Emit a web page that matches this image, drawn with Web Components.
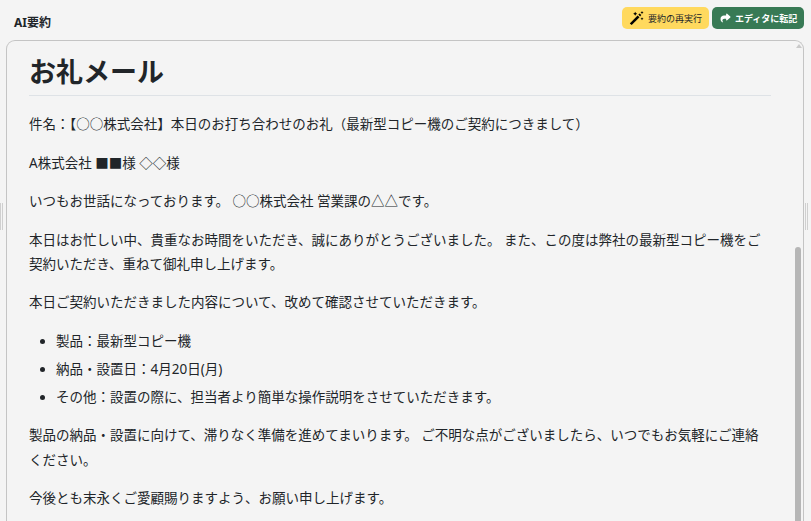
<!DOCTYPE html>
<html lang="ja"><head><meta charset="utf-8"><style>
html,body{margin:0;height:100%;overflow:hidden;background:#f4f4f4}
body{font-family:"Noto Sans","Noto Sans CJK JP",sans-serif;color:#212529}
</style></head><body>
<summary-pane>
  <span slot="title">AI要約</span>
  <action-button slot="actions" kind="rerun">要約の再実行</action-button>
  <action-button slot="actions" kind="transfer">エディタに転記</action-button>
  <doc-view>
    <h1>お礼メール</h1>
    <p>件名：【○○株式会社】本日のお打ち合わせのお礼（最新型コピー機のご契約につきまして）</p>
    <p>A株式会社 ■■様 ◇◇様</p>
    <p>いつもお世話になっております。 ○○株式会社 営業課の△△です。</p>
    <p>本日はお忙しい中、貴重なお時間をいただき、誠にありがとうございました。 また、この度は弊社の最新型コピー機をご契約いただき、重ねて御礼申し上げます。</p>
    <p>本日ご契約いただきました内容について、改めて確認させていただきます。</p>
    <ul><li>製品：最新型コピー機</li><li>納品・設置日：4月20日(月)</li><li>その他：設置の際に、担当者より簡単な操作説明をさせていただきます。</li></ul>
    <p>製品の納品・設置に向けて、滞りなく準備を進めてまいります。 ご不明な点がございましたら、いつでもお気軽にご連絡ください。</p>
    <p>今後とも末永くご愛顧賜りますよう、お願い申し上げます。</p>
  </doc-view>
</summary-pane>
<script>
customElements.define('summary-pane',class extends HTMLElement{constructor(){super();this.attachShadow({mode:'open'}).innerHTML=`<style>
:host{display:flex;flex-direction:column;height:521px;position:relative;box-sizing:border-box;padding:0 7px 0 6px;overflow:hidden}
header{height:40px;flex:none;display:flex;align-items:center;justify-content:space-between;box-sizing:border-box;padding:4px 0 0 8px}
.t{font-size:12px;font-weight:700;color:#212529}
.a{display:flex;gap:3px;position:relative;top:-4px}
.panel{flex:1;min-height:0;border:1px solid #c4c4c4;border-bottom:0;border-radius:9px 9px 0 0;overflow:hidden;position:relative}
.thumb{position:absolute;right:2px;top:206px;bottom:0;width:6px;background:#b6b6b6;border-radius:3px 3px 0 0}
.up{position:absolute;right:1px;top:3px;width:0;height:0;border:3px solid transparent;border-top:0;border-bottom:4px solid #c9c9c9}
.h{position:absolute;top:203px;height:27px;width:3px;box-sizing:border-box;border-left:1px solid #cfcfcf;border-right:1px solid #cfcfcf}
.h.l{left:0}.h.r{right:3px}
</style>
<header><span class="t"><slot name="title"></slot></span><div class="a"><slot name="actions"></slot></div></header>
<div class="panel"><slot></slot><div class="up"></div><div class="thumb"></div></div>
<div class="h l"></div><div class="h r"></div>`}});
const icons={rerun:`<svg width="15" height="14" viewBox="0 0 15 14"><path d="M.8 12.400 L8.600 4.400 L10.500 6.200 L2.700 14Z" fill="#000"/><path d="M9.300 3.600 L10.600 2.400 L12.300 4.100 L11.100 5.400Z" fill="#000"/><path d="M6.200 .8l.7 1.300 1.300.7-1.300.7-.7 1.300-.7-1.300-1.300-.7 1.300-.7zM13 0l.5 1.100 1.100.5-1.100.5-.5 1.100-.5-1.100-1.100-.5 1.100-.5zM13 6.200l.5 1 1 .5-1 .5-.5 1-.5-1-1-.5 1-.5z" fill="#000"/></svg>`,
transfer:`<svg width="11" height="10" viewBox="0 0 512 512"><path fill="#fff" d="M307 34.800c-11.500 5.100-19 16.600-19 29.200v64H176C78.800 128 0 206.800 0 304c0 113.300 81.500 163.900 100.200 174.100 2.500 1.400 5.300 1.900 8.100 1.900 10.900 0 19.700-8.900 19.700-19.700 0-7.500-4.300-14.400-9.800-19.500C108.800 431.900 96 414.400 96 384c0-53 43-96 96-96h96v64c0 12.600 7.400 24.100 19 29.200s25 3 34.400-5.400l160-144c6.700-6.100 10.600-14.700 10.600-23.800s-3.800-17.700-10.600-23.800l-160-144c-9.400-8.500-22.900-10.600-34.400-5.400z"/></svg>`};
customElements.define('action-button',class extends HTMLElement{constructor(){super();this.attachShadow({mode:'open'})}
connectedCallback(){const k=this.getAttribute('kind');this.shadowRoot.innerHTML=`<style>
:host{display:flex;align-items:center;box-sizing:border-box;height:22px;border-radius:5px;font-size:9px;white-space:nowrap}
:host([kind=rerun]){width:87px;background:#ffd95e;color:#212529;padding-left:7px;gap:4px}
:host([kind=transfer]){width:92px;background:#387a55;color:#fff;font-weight:700;padding-left:8px;gap:4px}
svg{display:block;flex:none}
</style>${icons[k]}<slot></slot>`}});
customElements.define('doc-view',class extends HTMLElement{constructor(){super();this.attachShadow({mode:'open'}).innerHTML=`<style>
:host{display:block;padding:12px 33px 0 22px;font-size:13.5px;line-height:24.400px;color:#212529}
::slotted(h1){font-size:27px;line-height:38px;font-weight:700;margin:0 -1px 16px 0;padding:0 0 4px;border-bottom:1px solid #dee2e6}
::slotted(p){margin:0 0 14.100px}
::slotted(ul){margin:0 0 14.100px;padding:0 0 0 27px}
</style><slot></slot>`}});
</script>
<style>
doc-view li{margin-bottom:3.600px}
doc-view li:last-child{margin-bottom:0}
</style>
</body></html>
